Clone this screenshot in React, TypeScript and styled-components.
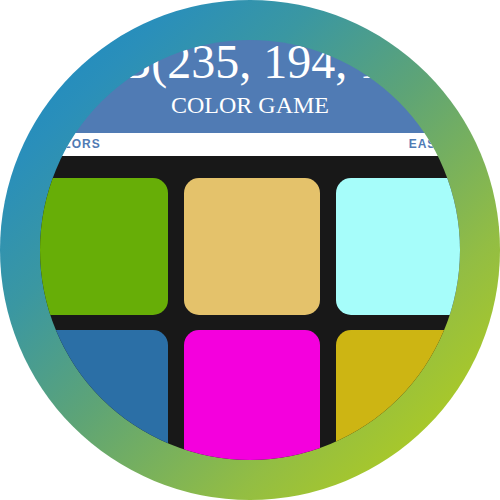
import React from "react";
import styled, { createGlobalStyle } from "styled-components";

const GlobalStyle = createGlobalStyle`
  html, body {
    margin: 0;
    padding: 0;
    background: #ffffff;
  }
  * { box-sizing: border-box; }
`;

const Frame = styled.div`
  width: 500px;
  height: 500px;
  border-radius: 50%;
  padding: 40px;
  background: linear-gradient(
    135deg,
    #1787c8 0%,
    #2a8fba 18%,
    #3a97a2 32%,
    #5ea476 50%,
    #92bd44 73%,
    #a8c82a 86%,
    #b3cf1c 100%
  );
`;

const Lens = styled.div`
  width: 420px;
  height: 420px;
  border-radius: 50%;
  overflow: hidden;
  position: relative;
`;

const Page = styled.div`
  width: 500px;
  height: 500px;
  margin: -40px 0 0 -40px;
  display: flex;
  flex-direction: column;
`;

const Header = styled.header`
  background: #507bb4;
  color: #ffffff;
  text-align: center;
  padding: 34px 0 14px;
  font-family: "Liberation Serif", "Times New Roman", serif;
`;

const Title = styled.h1`
  margin: 0;
  font-size: 48px;
  line-height: 56px;
  font-weight: normal;
  white-space: nowrap;
`;

const Subtitle = styled.div`
  margin-top: 1px;
  font-size: 24px;
  line-height: 28px;
  text-transform: uppercase;
`;

const Nav = styled.nav`
  height: 23px;
  background: #ffffff;
  display: flex;
  justify-content: space-between;
  align-items: center;
  padding: 0 6px 0 8px;
  font-family: "Liberation Sans", Arial, sans-serif;
`;

const Group = styled.div`
  display: flex;
  gap: 10px;
`;

const NavButton = styled.button<{ $selected?: boolean }>`
  border: none;
  padding: 0;
  margin: 0;
  background: ${(p) => (p.$selected ? "#507bb4" : "transparent")};
  color: ${(p) => (p.$selected ? "#ffffff" : "#507bb4")};
  font-family: inherit;
  font-size: 12px;
  line-height: 23px;
  font-weight: 700;
  letter-spacing: 1px;
  text-transform: uppercase;
`;

const Board = styled.main`
  flex: 1;
  background: #181818;
  padding: 22px 0 0 32px;
  display: grid;
  grid-template-columns: repeat(3, 136px);
  grid-auto-rows: 137px;
  column-gap: 16px;
  row-gap: 15px;
`;

const Tile = styled.div<{ $color: string }>`
  background: ${(p) => p.$color};
  border-radius: 15px;
`;

const colors = ["#67ae07", "#e4c26b", "#a6fdfa", "#2b6fa6", "#f400dd", "#cdb513"];

export default function App() {
  return (
    <>
      <GlobalStyle />
      <Frame>
        <Lens>
          <Page>
            <Header>
              <Title>RGB(235, 194, 107)</Title>
              <Subtitle>Color Game</Subtitle>
            </Header>
            <Nav>
              <NavButton>New Colors</NavButton>
              <Group>
                <NavButton>Easy</NavButton>
                <NavButton $selected>Hard</NavButton>
              </Group>
            </Nav>
            <Board>
              {colors.map((c) => (
                <Tile key={c} $color={c} />
              ))}
            </Board>
          </Page>
        </Lens>
      </Frame>
    </>
  );
}
